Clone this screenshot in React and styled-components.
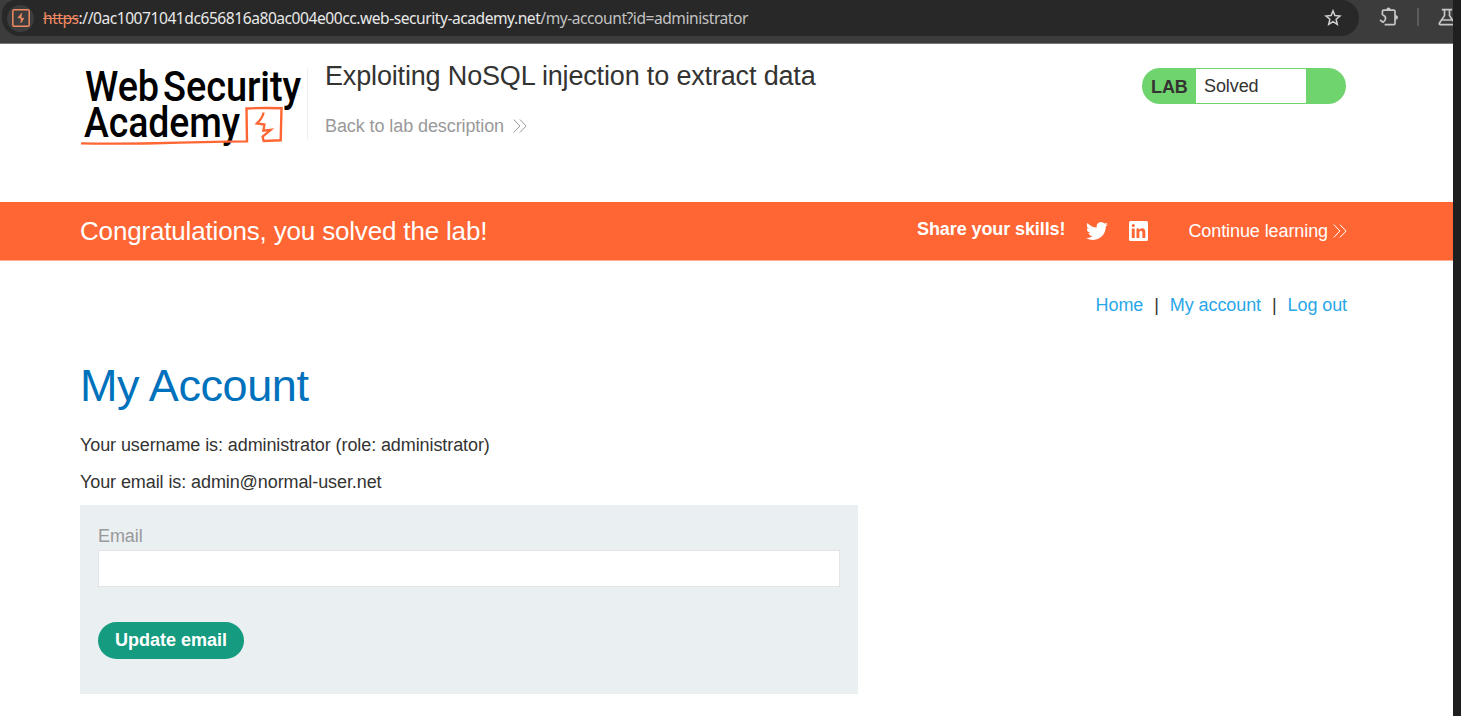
import React from 'react';
import styled, { createGlobalStyle } from 'styled-components';

const App = () => {
  return (
    <>
      <GlobalStyle />
      <Screen>
        <Browser>
          <Toolbar>
            <AddressBar>
              <SiteBadge>
                <BurpIcon />
              </SiteBadge>
              <Url>
                <s>https</s>
                <b>://0ac10071041dc656816a80ac004e00cc.web-security-academy.net</b>
                /my-account?id=administrator
              </Url>
              <StarIcon />
            </AddressBar>
            <PuzzleIcon />
            <ToolbarDivider />
            <FlaskIcon />
          </Toolbar>

          <LabHeader>
            <AcademyLogo />
            <TitleBox>
              <LabTitle>Exploiting NoSQL injection to extract data</LabTitle>
              <BackLink href="#">
                Back to lab description
                <Chevrons $color="#999" />
              </BackLink>
            </TitleBox>
            <LabStatus>
              <LabTag>LAB</LabTag>
              <LabState>Solved</LabState>
            </LabStatus>
          </LabHeader>

          <Banner>
            <BannerTitle>Congratulations, you solved the lab!</BannerTitle>
            <Share>Share your skills!</Share>
            <TwitterIcon />
            <LinkedinIcon />
            <ContinueLink href="#">
              Continue learning
              <Chevrons $color="#fff" />
            </ContinueLink>
          </Banner>

          <Nav>
            <a href="#">Home</a>
            <span>|</span>
            <a href="#">My account</a>
            <span>|</span>
            <a href="#">Log out</a>
          </Nav>

          <Content>
            <Heading>My Account</Heading>
            <Info>Your username is: administrator (role: administrator)</Info>
            <Info>Your email is: admin@normal-user.net</Info>
            <EmailForm onSubmit={(e) => e.preventDefault()}>
              <label htmlFor="email">Email</label>
              <EmailInput id="email" type="email" />
              <SubmitButton type="submit">Update email</SubmitButton>
            </EmailForm>
          </Content>
        </Browser>
      </Screen>
    </>
  );
};

const BurpIcon = () => (
  <svg width="18" height="18" viewBox="0 0 18 18" fill="none">
    <rect x="0.8" y="0.8" width="16.4" height="16.4" rx="1.5" stroke="#f08a62" strokeWidth="1.5" />
    <path d="M9.8 4 L5.8 8.8 L9 9.2 Z M8.6 8.8 L12 9.4 L8.8 14 L9.2 10.6 Z" fill="#f08a62" stroke="#f08a62" strokeWidth="0.5" />
  </svg>
);

const StarIcon = () => (
  <svg width="18" height="18" viewBox="0 0 18 18" fill="none">
    <path
      d="M9 1.9 L10.9 6.6 L16 7 L12.1 10.3 L13.3 15.3 L9 12.6 L4.7 15.3 L5.9 10.3 L2 7 L7.1 6.6 Z"
      stroke="#d0d0d0"
      strokeWidth="1.5"
    />
  </svg>
);

const PuzzleIcon = () => (
  <svg width="22" height="22" viewBox="0 0 22 22" fill="none">
    <path
      d="M3.4 8 V4.4 Q3.4 3.2 4.6 3.2 H14.8 Q16 3.2 16 4.4 V16.4 Q16 17.6 14.8 17.6 H5.6"
      stroke="#c7c7c7"
      strokeWidth="1.7"
    />
    <path d="M3.4 8 Q6.8 8.8 6.6 11.6 Q6.2 13.8 4 15.2 L1 13" stroke="#c7c7c7" strokeWidth="1.7" />
    <path d="M7.3 3 Q7.3 0.6 9.5 0.6 Q11.7 0.6 11.7 3 Z M16.2 8.1 Q19 8.3 19 10.4 Q19 12.5 16.2 12.7 Z" fill="#c7c7c7" />
  </svg>
);

const FlaskIcon = () => (
  <svg width="18" height="20" viewBox="0 0 18 20" fill="none">
    <path
      d="M3.8 2.6 H14.2 M6.5 2.6 V8.6 L1.4 16.2 Q1 17.6 2.4 17.6 H15.6 Q17 17.6 16.6 16.2 L11.5 8.6 V2.6 M4.5 13 H13.5"
      stroke="#c7c7c7"
      strokeWidth="1.7"
    />
  </svg>
);

const AcademyLogo = () => (
  <Logo viewBox="0 0 227 90">
    <g fill="#000" fontFamily="Roboto, sans-serif" fontSize="43" fontWeight="500">
      <text x="5" y="41" textLength="74" lengthAdjust="spacingAndGlyphs">Web</text>
      <text x="83" y="41" textLength="138" lengthAdjust="spacingAndGlyphs">Security</text>
      <text x="4" y="77" textLength="156" lengthAdjust="spacingAndGlyphs">Academy</text>
    </g>
    <g fill="none" stroke="#ff6633" strokeWidth="2.4">
      <path d="M1 83.4 Q30 84 75 83.2 Q125 81.8 167 81.4 L166.5 48.5 Q183 47.6 201.5 48.2 L200.7 80.3 L183.7 81 L182.6 76.7 L190.7 69.8 L183.4 70.6 L184.4 64.6 L177 63.4 Q183 57.5 183.5 52.5" />
    </g>
  </Logo>
);

const Chevrons = ({ $color }) => (
  <svg width="14" height="16" viewBox="0 0 14 16" fill="none" stroke={$color} strokeWidth="1">
    <path d="M0.7 1.5 L6.9 8 L0.7 14.5 M6.9 1.5 L13.1 8 L6.9 14.5" />
  </svg>
);

const TwitterIcon = () => (
  <svg width="22" height="22" viewBox="0 0 24 24" fill="#fff">
    <path d="M23.953 4.57a10 10 0 01-2.825.775 4.958 4.958 0 002.163-2.723c-.951.555-2.005.959-3.127 1.184a4.92 4.92 0 00-8.384 4.482C7.69 8.095 4.067 6.13 1.64 3.162a4.822 4.822 0 00-.666 2.475c0 1.71.87 3.213 2.188 4.096a4.904 4.904 0 01-2.228-.616v.06a4.923 4.923 0 003.946 4.827 4.996 4.996 0 01-2.212.085 4.936 4.936 0 004.604 3.417 9.867 9.867 0 01-6.102 2.105c-.39 0-.779-.023-1.17-.067a13.995 13.995 0 007.557 2.209c9.053 0 13.998-7.496 13.998-13.985 0-.21 0-.42-.015-.63A9.935 9.935 0 0024 4.59z" />
  </svg>
);

const LinkedinIcon = () => (
  <svg width="19" height="20" viewBox="0 0 19 20">
    <rect width="19" height="20" rx="1.5" fill="#fff" />
    <path
      d="M2.8 7.5 H5.7 V17 H2.8 Z M2.7 4.5 A1.6 1.6 0 1 1 5.9 4.5 A1.6 1.6 0 1 1 2.7 4.5 Z M7.5 7.5 H10.2 V8.9 Q11.1 7.3 13.1 7.3 Q16.3 7.3 16.3 11 V17 H13.4 V11.8 Q13.4 9.8 11.9 9.8 Q10.3 9.8 10.3 11.8 V17 H7.5 Z"
      fill="#ff6633"
    />
  </svg>
);

const GlobalStyle = createGlobalStyle`
  * {
    box-sizing: border-box;
  }
  body {
    margin: 0;
    overflow: hidden;
    font-family: 'Liberation Sans', Arial, sans-serif;
    font-size: 18px;
    letter-spacing: -0.09px;
    color: #333332;
  }
  a {
    text-decoration: none;
  }
  svg {
    display: block;
    flex: none;
  }
`;

const Screen = styled.div`
  height: 716px;
  padding-right: 8px;
  background: #1f1f1f;
`;

const Browser = styled.div`
  height: 100%;
  overflow: hidden;
  background: #fff;
`;

const Toolbar = styled.div`
  display: flex;
  align-items: flex-start;
  height: 44px;
  overflow: hidden;
  background: #3c3c3c;
  border-bottom: 1px solid #777;
  & > svg {
    margin-top: 7px;
  }
  & > svg:last-child {
    margin-left: 19px;
  }
`;

const AddressBar = styled.div`
  display: flex;
  flex: none;
  align-items: center;
  width: 1357px;
  height: 36px;
  margin: 0 20px 0 2px;
  padding: 0 17px 0 5px;
  border-radius: 14px 18px 18px 18px;
  background: #282828;
`;

const SiteBadge = styled.div`
  display: flex;
  align-items: center;
  justify-content: center;
  width: 27px;
  height: 27px;
  margin-right: 9px;
  border-radius: 50%;
  background: #3c3c3c;
`;

const Url = styled.div`
  flex: 1;
  font-family: 'Noto Sans', sans-serif;
  font-size: 15.6px;
  letter-spacing: -0.47px;
  white-space: nowrap;
  color: #c3c3c3;
  s {
    color: #f08a62;
  }
  b {
    font-weight: 400;
    color: #e8e8e8;
  }
`;

const ToolbarDivider = styled.div`
  flex: none;
  width: 2px;
  height: 18px;
  margin: 8px 0 0 16px;
  background: #5c5c5c;
`;

const LabHeader = styled.header`
  display: flex;
  align-items: flex-start;
  height: 158px;
  padding: 16px 107px 0 80px;
`;

const Logo = styled.svg`
  width: 227px;
  height: 90px;
  overflow: visible;
`;

const TitleBox = styled.div`
  flex: 1;
  height: 70px;
  margin-top: 9px;
  padding-left: 17px;
  border-left: 1px solid #eee;
`;

const LabTitle = styled.h2`
  margin: -9px 0 0;
  font-size: 27px;
  font-weight: 400;
  line-height: 32px;
  letter-spacing: -0.16px;
`;

const BackLink = styled.a`
  display: flex;
  align-items: center;
  gap: 9px;
  margin-top: 24px;
  line-height: 20px;
  color: #999;
`;

const LabStatus = styled.div`
  display: flex;
  width: 204px;
  height: 36px;
  margin-top: 8px;
  padding: 1px 40px 1px 0;
  border-radius: 18px;
  background: #70d46e;
  line-height: 36px;
`;

const LabTag = styled.strong`
  width: 54px;
  padding-left: 9px;
`;

const LabState = styled.span`
  flex: 1;
  padding-left: 8px;
  background: #fff;
  line-height: 34px;
`;

const Banner = styled.section`
  display: flex;
  align-items: center;
  height: 58px;
  padding: 0 106px 0 80px;
  background: #ff6633;
  box-shadow: 0 1px #ffae91;
  color: #fff;
  & > svg {
    margin-right: 21px;
  }
`;

const BannerTitle = styled.div`
  flex: 1;
  font-size: 26px;
  letter-spacing: -0.17px;
`;

const Share = styled.strong`
  margin: -3px 21px 0 0;
`;

const ContinueLink = styled.a`
  display: flex;
  align-items: center;
  gap: 5px;
  margin-left: 19px;
  color: #fff;
`;

const Nav = styled.nav`
  display: flex;
  justify-content: flex-end;
  gap: 11px;
  padding: 34px 106px 0 0;
  line-height: 22px;
  a {
    color: #29a7e8;
  }
`;

const Content = styled.main`
  width: 858px;
  padding: 40px 0 0 80px;
`;

const Heading = styled.h1`
  margin: 0 0 18px;
  font-size: 45px;
  font-weight: 400;
  line-height: 60px;
  letter-spacing: -0.4px;
  color: #0071bc;
`;

const Info = styled.p`
  margin: 0 0 15px;
  line-height: 22px;
`;

const EmailForm = styled.form`
  display: flex;
  flex-direction: column;
  align-items: flex-start;
  height: 189px;
  margin-top: -3px;
  padding: 20px 18px;
  background: #eaeff2;
  label {
    line-height: 22px;
    color: #999;
  }
`;

const EmailInput = styled.input`
  width: 100%;
  height: 37px;
  margin: 3px 0 35px;
  border: 1px solid #e2e4e6;
  background: #fff;
  outline: none;
`;

const SubmitButton = styled.button`
  width: 146px;
  height: 37px;
  padding: 0;
  border: 0;
  border-radius: 19px;
  background: #159b80;
  color: #fff;
  font: bold 18px 'Liberation Sans', Arial, sans-serif;
`;

export default App;
